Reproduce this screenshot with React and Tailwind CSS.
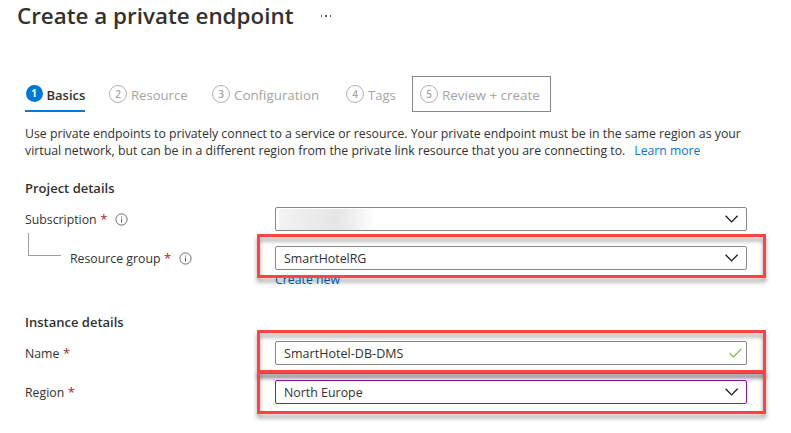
import React from "react";

function Step({ n, label, labelClass, active }) {
  return (
    <div className="flex items-center">
      <span
        className={
          active
            ? "ml-[0.5px] flex size-[17px] items-center justify-center rounded-full bg-[#0078d4] text-[10px] font-bold leading-none text-white"
            : "flex size-[18px] items-center justify-center rounded-full border border-[#b3b1af] text-[10px] font-semibold leading-none text-[#a6a4a2]"
        }
      >
        {n}
      </span>
      <span className={`ml-1 whitespace-nowrap leading-[18px] ${labelClass}`}>{label}</span>
    </div>
  );
}

function Info() {
  return (
    <svg className="size-[13px]" viewBox="0 0 13 13" fill="none" stroke="#605e5c">
      <circle cx="6.5" cy="6.5" r="5.6" strokeWidth="0.9" />
      <path d="M6.5 5.6V9.6M6.5 3.5V4.6" strokeWidth="1" />
    </svg>
  );
}

function Chevron() {
  return (
    <svg className="h-[8px] w-[14px]" viewBox="0 0 14 8" fill="none" stroke="#1b1a19" strokeWidth="1.3">
      <path d="M0.6 0.8L6.6 6.9L12.6 0.8" />
    </svg>
  );
}

function Check() {
  return (
    <svg className="h-[10px] w-[13px]" viewBox="0 0 13 10" fill="none" stroke="#7ab648" strokeWidth="1.2">
      <path d="M0.6 5.3L4.4 8.9L12.3 0.8" />
    </svg>
  );
}

function Star() {
  return <span className="ml-[3.5px] text-[13px] font-medium text-[#a4262c]">*</span>;
}

function Field({ children, icon, className }) {
  return (
    <div className={`flex h-6 w-[472px] items-center justify-between rounded-[2px] border bg-white pl-2 text-[12.5px] ${className}`}>
      {children}
      {icon}
    </div>
  );
}

function Highlight({ className }) {
  return (
    <div
      className={`pointer-events-none absolute left-[257px] h-[44px] w-[509px] border-[3px] border-[#ff4343] [filter:drop-shadow(0_4px_2px_rgba(0,0,0,0.38))] ${className}`}
    />
  );
}

export default function App() {
  return (
    <main className="relative h-[433px] w-[791px] overflow-hidden bg-white font-['Open_Sans','Noto_Sans',sans-serif] text-[12.3px] leading-[17px] text-[#323130]">
      <header className="flex h-[76px] items-start pl-[17px]">
        <h1 className="w-[303.5px] whitespace-nowrap text-[22.4px] font-semibold leading-[32px] text-[#323130]">
          Create a private endpoint
        </h1>
        <div className="flex gap-[3px] pt-[15px]">
          <i className="size-[1.5px] bg-[#605e5c]" />
          <i className="size-[1.5px] bg-[#605e5c]" />
          <i className="size-[1.5px] bg-[#605e5c]" />
        </div>
      </header>

      <nav className="flex h-9 pl-[25px]">
        <div className="flex w-[60px] border-b-2 border-[#0078d4]">
          <Step n="1" label="Basics" active labelClass="mt-[3.5px] text-[13px] font-semibold" />
        </div>
        <div className="ml-6 flex w-[103px]">
          <Step n="2" label="Resource" labelClass="mt-[2px] text-[13.1px] text-[#a6a4a2]" />
        </div>
        <div className="flex w-[134px]">
          <Step n="3" label="Configuration" labelClass="mt-[2px] text-[13.35px] text-[#a6a4a2]" />
        </div>
        <div className="flex w-[66px]">
          <Step n="4" label="Tags" labelClass="mt-[2px] text-[13px] text-[#a6a4a2]" />
        </div>
        <div className="flex w-[139px] border border-[#8a8886] pl-[7px]">
          <Step n="5" label="Review + create" labelClass="mt-[2px] text-[13.45px] text-[#a6a4a2]" />
        </div>
      </nav>

      <div className="whitespace-nowrap pl-[25px] pt-[13px]">
        <p>Use private endpoints to privately connect to a service or resource. Your private endpoint must be in the same region as your</p>
        <p>
          <span>virtual network, but can be in a different region from the private link resource that you are connecting to.</span>
          <a className="ml-[9px] text-[12.2px] text-[#0078d4]">Learn more</a>
        </p>
      </div>

      <section className="pl-[25px] pt-5">
        <h2 className="h-[28px] text-[13px] font-semibold leading-[18px]">Project details</h2>
        <div className="flex h-6 items-center">
          <div className="flex w-[250px] items-center">
            <span>Subscription</span>
            <Star />
            <span className="ml-2"><Info /></span>
          </div>
          <Field className="border-[#8a8886]" icon={<span className="mr-[7px]"><Chevron /></span>}>
            <span className="-ml-[5px] h-[21px] w-[97px] bg-linear-to-r from-[#f3f3f3] via-[#e5e5e5] via-60% to-white" />
          </Field>
        </div>
        <div className="mt-[15px] flex h-6 items-center">
          <div className="flex w-[250px] items-center">
            <span className="-mt-[27px] ml-[3px] h-[23px] w-[33px] border-b border-l border-[#a19f9d]" />
            <span className="ml-[9px]">Resource group</span>
            <Star />
            <span className="ml-2"><Info /></span>
          </div>
          <Field className="border-[#8a8886]" icon={<span className="mr-[7px]"><Chevron /></span>}>
            <span className="text-[12.4px]">SmartHotelRG</span>
          </Field>
        </div>
        <a className="ml-[250px] block h-[17px] pt-px text-[#0067b8]">Create new</a>
      </section>

      <section className="pl-[25px] pt-[26px]">
        <h2 className="h-[28px] text-[13px] font-semibold leading-[18px]">Instance details</h2>
        <div className="flex h-6 items-center">
          <div className="flex w-[250px] items-center">
            <span>Name</span>
            <Star />
          </div>
          <Field className="border-[#8a8886]" icon={<span className="mr-1"><Check /></span>}>
            <span className="tracking-[0.05px]">SmartHotel-DB-DMS</span>
          </Field>
        </div>
        <div className="mt-[15px] flex h-6 items-center">
          <div className="flex w-[250px] items-center">
            <span>Region</span>
            <Star />
          </div>
          <Field className="border-[#881798]" icon={<span className="mr-[7px]"><Chevron /></span>}>
            <span className="text-[12.4px]">North Europe</span>
          </Field>
        </div>
      </section>

      <Highlight className="top-[234px]" />
      <Highlight className="top-[330px]" />
      <Highlight className="top-[370px]" />
    </main>
  );
}
